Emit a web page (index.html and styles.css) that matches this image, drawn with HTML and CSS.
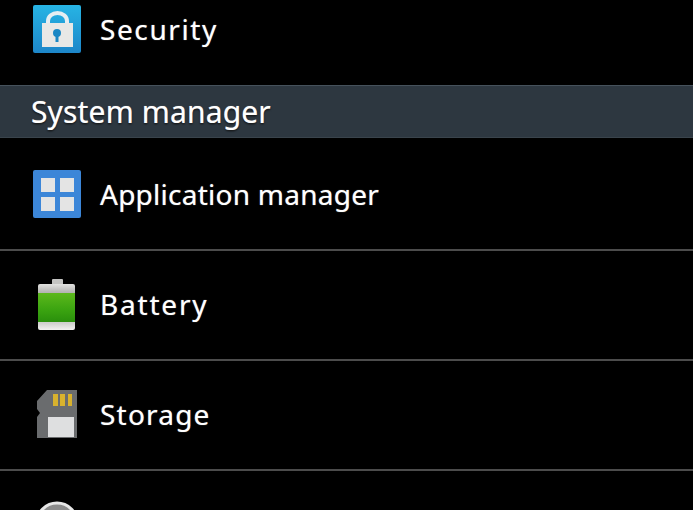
FILE: index.html
```html
<!DOCTYPE html>
<html lang="en">
<head>
    <meta charset="UTF-8">
    <meta name="viewport" content="width=device-width, initial-scale=1.0">
    <title>Settings</title>
    <link rel="stylesheet" href="styles.css">
</head>
<body>
    <div id="settings-list">
        <div class="row row-top">
            <svg class="icon" viewBox="0 0 48 48">
                <defs>
                    <linearGradient id="lock-bg" x1="0" y1="0" x2="0" y2="1">
                        <stop offset="0" stop-color="#27b4e4"/>
                        <stop offset="1" stop-color="#1d86c9"/>
                    </linearGradient>
                </defs>
                <rect width="48" height="48" rx="2" fill="url(#lock-bg)"/>
                <path d="M15 19v-3a9.500 8 0 0 1 19 0v3" fill="none" stroke="#e6eef2" stroke-width="4"/>
                <rect x="9" y="18" width="31" height="24" fill="#e8e8e6"/>
                <circle cx="24" cy="28" r="4" fill="#1a87c4"/>
                <rect x="22.500" y="29" width="3" height="8" fill="#1a87c4"/>
            </svg>
            <span class="label label-security">Security</span>
        </div>

        <div class="section-header">System manager</div>

        <div class="row row-first">
            <svg class="icon" viewBox="0 0 48 48">
                <rect width="48" height="48" rx="2" fill="#3c86d8"/>
                <rect x="8" y="8" width="14" height="14" fill="#e4e4e4"/>
                <rect x="27" y="8" width="14" height="14" fill="#e4e4e4"/>
                <rect x="8" y="27" width="14" height="14" fill="#e4e4e4"/>
                <rect x="27" y="27" width="14" height="14" fill="#e4e4e4"/>
            </svg>
            <span class="label label-apps">Application manager</span>
        </div>

        <div class="row">
            <svg class="icon icon-tall" viewBox="0 0 48 52">
                <defs>
                    <linearGradient id="cell" x1="0" y1="0" x2="0" y2="1">
                        <stop offset="0" stop-color="#e2e2e0"/>
                        <stop offset="0.18" stop-color="#b4b4b2"/>
                        <stop offset="0.85" stop-color="#d0d0ce"/>
                        <stop offset="1" stop-color="#f2f2f0"/>
                    </linearGradient>
                    <linearGradient id="charge" x1="0" y1="0" x2="0" y2="1">
                        <stop offset="0" stop-color="#5cb81c"/>
                        <stop offset="0.6" stop-color="#3aa310"/>
                        <stop offset="1" stop-color="#2a8f0c"/>
                    </linearGradient>
                </defs>
                <rect x="19" y="0" width="11" height="6" rx="1" fill="#c4c4c2"/>
                <rect x="5" y="5" width="37" height="46" rx="2" fill="url(#cell)"/>
                <rect x="5" y="14" width="37" height="29" fill="url(#charge)"/>
            </svg>
            <span class="label label-battery">Battery</span>
        </div>

        <div class="row">
            <svg class="icon" viewBox="0 1 48 48">
                <path d="M14 0H44V48H4V27L7 23 4 19V11Z" fill="#6a6c6e"/>
                <rect x="20" y="4" width="5" height="12" fill="#d8b22e"/>
                <rect x="27" y="4" width="5" height="12" fill="#d8b22e"/>
                <rect x="35" y="4" width="4" height="12" fill="#d8b22e"/>
                <rect x="15" y="27" width="26" height="20" fill="#dedfe0"/>
            </svg>
            <span class="label label-storage">Storage</span>
        </div>

        <div class="row row-cut">
            <svg class="icon" viewBox="0 0 48 48">
                <circle cx="24" cy="22" r="20" fill="#8c8c8c" stroke="#e8e8e8" stroke-width="3"/>
            </svg>
        </div>
    </div>
</body>
</html>
```

FILE: styles.css
```css
html, body {
    height: 100%;
}

body {
    margin: 0;
    background-color: #000;
    color: #fff;
    font-family: "Noto Sans", sans-serif;
    overflow: hidden;
}

/* list is scrolled, the first row is cut by the top of the screen */
#settings-list {
    margin-top: -27px;
}

.row {
    box-sizing: border-box;
    display: flex;
    align-items: center;
    gap: 19px;
    height: 110px;
    padding-left: 33px;
    border-bottom: 2px solid #4c4c4c;
}

.row-top {
    height: 112px;
    border-bottom: none;
}

.row-first {
    height: 113px;
}

/* last row only shows the top of its icon */
.row-cut {
    height: 39px;
    align-items: flex-start;
    padding-top: 30px;
    border-bottom: none;
    overflow: hidden;
}

.icon {
    flex: none;
    width: 48px;
    height: 48px;
    overflow: visible;
}

.icon-tall {
    height: 52px;
}

.label {
    font-size: 28px;
    text-shadow: 0 0 1px rgba(255, 255, 255, 0.6);
}

.label-security {
    letter-spacing: 1.6px;
}

.label-apps {
    letter-spacing: 0.25px;
}

.label-battery {
    padding-bottom: 2px;
    letter-spacing: 1.8px;
}

.label-storage {
    padding-bottom: 2px;
    letter-spacing: 1.2px;
}

.section-header {
    box-sizing: border-box;
    display: flex;
    align-items: center;
    height: 53px;
    padding-left: 31px;
    background-color: #2d3740;
    border-top: 1px solid #46525c;
    border-bottom: 1px solid #3a444c;
    font-size: 30px;
    letter-spacing: 0.15px;
    text-shadow: 0 0 1px rgba(255, 255, 255, 0.6), 0 1px 2px #000;
}
```
